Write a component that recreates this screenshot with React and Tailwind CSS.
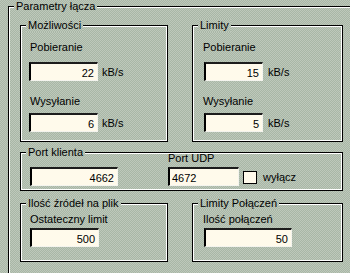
const PATTERN =
  "bg-[#b2beaf] bg-[conic-gradient(#a8b7a6_25%,#bec8bb_0_50%,#a8b7a6_0_75%,#bec8bb_0)] bg-[length:2px_2px]";

function GroupBox({ title, className = "", children }) {
  return (
    <fieldset
      className={`border border-black shadow-[inset_1px_1px_0_#fff,inset_-1px_-1px_0_#fff] ${className}`}
    >
      <legend className={`ml-[5px] px-[2px] ${PATTERN}`}>{title}</legend>
      {children}
    </fieldset>
  );
}

function Box({ value, left = false, className = "" }) {
  return (
    <div
      className={`h-[19px] border-t-2 border-l-2 border-r border-b border-t-[#1c1c1c] border-l-black border-r-[#f4f4ee] border-b-[#f4f4ee] bg-[#fffaeb] pt-[3px] ${
        left ? "pl-[2px] text-left" : "pr-[3px] text-right"
      } ${className}`}
    >
      {value}
    </div>
  );
}

export default function App() {
  return (
    <div
      className={`w-[350px] h-[273px] overflow-hidden ${PATTERN} font-['Liberation_Sans',Arial,sans-serif] text-[11px] leading-[13px] text-black`}
    >
      <GroupBox title="Parametry łącza" className="ml-[8px] w-[360px] h-[300px]">
        <div className="pl-[11px] pt-[6px]">
          {/* Możliwości / Limity */}
          <div className="flex gap-[24px]">
            <GroupBox title="Możliwości" className="w-[148px] h-[123px]">
              <div className="pl-[8px]">
                <div className="mt-[9px] pl-[1px]">Pobieranie</div>
                <div className="mt-[8px] flex items-center">
                  <Box value="22" className="w-[69px]" />
                  <span className="ml-[4px] pt-[1px]">kB/s</span>
                </div>
                <div className="mt-[14px] pl-[1px]">Wysyłanie</div>
                <div className="mt-[5px] flex items-center">
                  <Box value="6" className="w-[69px]" />
                  <span className="ml-[4px] pt-[1px]">kB/s</span>
                </div>
              </div>
            </GroupBox>
            <GroupBox title="Limity" className="w-[151px] h-[123px]">
              <div className="pl-[11px]">
                <div className="mt-[9px] -ml-[1px]">Pobieranie</div>
                <div className="mt-[8px] flex items-center">
                  <Box value="15" className="w-[59px]" />
                  <span className="ml-[5px] pt-[1px]">kB/s</span>
                </div>
                <div className="mt-[14px] -ml-[1px]">Wysyłanie</div>
                <div className="mt-[5px] flex items-center">
                  <Box value="5" className="w-[59px]" />
                  <span className="ml-[5px] pt-[1px]">kB/s</span>
                </div>
              </div>
            </GroupBox>
          </div>

          {/* Ports */}
          <GroupBox title="Port klienta" className="mt-[4px] w-[323px] h-[45px]">
            <div className="-mt-[7px] pl-[9px] flex items-end">
              <Box value="4662" className="w-[88px]" />
              <div className="ml-[50px]">
                <div>Port UDP</div>
                <Box value="4672" left className="mt-[2px] w-[71px]" />
              </div>
              <div className="ml-[4px] mb-[2px] flex items-center">
                <div className="w-[14px] h-[13px] border border-black bg-[#fffaeb]" />
                <span className="ml-[6px]">wyłącz</span>
              </div>
            </div>
          </GroupBox>

          {/* Sources / connections */}
          <div className="mt-[6px] flex gap-[24px]">
            <GroupBox title="Ilość źródeł na plik" className="w-[148px] h-[65px]">
              <div className="pl-[9px]">
                <div className="mt-[3px]">Ostateczny limit</div>
                <Box value="500" className="mt-[2px] w-[69px]" />
              </div>
            </GroupBox>
            <GroupBox title="Limity Połączeń" className="w-[151px] h-[65px]">
              <div className="pl-[11px]">
                <div className="mt-[3px] -ml-[1px]">Ilość połączeń</div>
                <Box value="50" className="mt-[2px] w-[88px]" />
              </div>
            </GroupBox>
          </div>
        </div>
      </GroupBox>
    </div>
  );
}
